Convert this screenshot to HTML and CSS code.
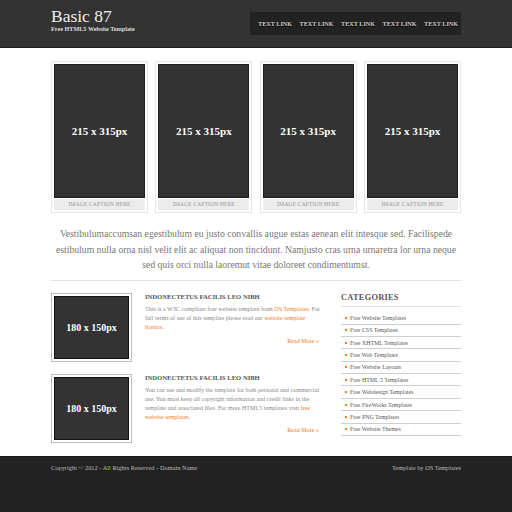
FILE: index.html
```html
<!DOCTYPE html>
<html>
<head>
<meta charset="utf-8">
<title>Basic 87</title>
<link rel="stylesheet" href="styles.css">
</head>
<body>
<header class="site-header">
  <div class="wrap header-inner">
    <div class="brand">
      <h1 class="logo">Basic 87</h1>
      <p class="tagline">Free HTML5 Website Template</p>
    </div>
    <nav class="topnav">
      <a href="#">Text Link</a>
      <a href="#">Text Link</a>
      <a href="#">Text Link</a>
      <a href="#">Text Link</a>
      <a href="#">Text Link</a>
    </nav>
  </div>
</header>

<main class="wrap">
  <section class="gallery">
    <figure class="card"><div class="ph">215 x 315px</div><figcaption>Image Caption Here</figcaption></figure>
    <figure class="card"><div class="ph">215 x 315px</div><figcaption>Image Caption Here</figcaption></figure>
    <figure class="card"><div class="ph">215 x 315px</div><figcaption>Image Caption Here</figcaption></figure>
    <figure class="card"><div class="ph">215 x 315px</div><figcaption>Image Caption Here</figcaption></figure>
  </section>

  <p class="intro">Vestibulumaccumsan egestibulum eu justo convallis augue estas aenean elit intesque sed. Facilispede estibulum nulla orna nisl velit elit ac aliquat non tincidunt. Namjusto cras urna urnaretra lor urna neque sed quis orci nulla laoremut vitae doloreet condimentumst.</p>

  <div class="lower">
    <div class="articles">
      <article class="post">
        <div class="thumb"><div class="thumb-in">180 x 150px</div></div>
        <div class="post-body">
          <h2>Indonectetus Facilis Leo Nibh</h2>
          <p>This is a W3C compliant free website template from <a href="#">OS Templates</a>. For full terms of use of this template please read our <a href="#">website template licence</a>.</p>
          <p class="more"><a href="#">Read More &raquo;</a></p>
        </div>
      </article>
      <article class="post">
        <div class="thumb"><div class="thumb-in">180 x 150px</div></div>
        <div class="post-body">
          <h2>Indonectetus Facilis Leo Nibh</h2>
          <p>You can use and modify the template for both personal and commercial use. You must keep all copyright information and credit links in the template and associated files. For more HTML5 templates visit <a href="#">free website templates</a>.</p>
          <p class="more"><a href="#">Read More &raquo;</a></p>
        </div>
      </article>
    </div>
    <aside class="sidebar">
      <h2>Categories</h2>
      <ul>
        <li><a href="#">Free Website Templates</a></li>
        <li><a href="#">Free CSS Templates</a></li>
        <li><a href="#">Free XHTML Templates</a></li>
        <li><a href="#">Free Web Templates</a></li>
        <li><a href="#">Free Website Layouts</a></li>
        <li><a href="#">Free HTML 5 Templates</a></li>
        <li><a href="#">Free Webdesign Templates</a></li>
        <li><a href="#">Free FireWorks Templates</a></li>
        <li><a href="#">Free PNG Templates</a></li>
        <li><a href="#">Free Website Themes</a></li>
      </ul>
    </aside>
  </div>
</main>

<footer class="site-footer">
  <div class="wrap footer-inner">
    <p>Copyright &copy; 2012 - All Rights Reserved - <a href="#">Domain Name</a></p>
    <p>Template by <a href="#">OS Templates</a></p>
  </div>
</footer>
</body>
</html>
```

FILE: styles.css
```css
* { box-sizing: border-box; }
html, body { margin: 0; padding: 0; }
body {
  font-family: "Liberation Serif", "DejaVu Serif", serif;
  background: #fff;
  color: #777;
}
a { text-decoration: none; }
p, h1, h2, ul, figure { margin: 0; padding: 0; }

.wrap { width: 410px; margin: 0 auto; }

/* header */
.site-header {
  background: #333;
  height: 48px;
  border-bottom: 1px solid #1c1c1c;
}
.header-inner {
  display: flex;
  justify-content: space-between;
  align-items: flex-start;
}
.brand { padding-top: 7px; }
.logo {
  font-size: 17.5px;
  font-weight: normal;
  color: #eee;
  line-height: 18px;
}
.tagline {
  font-size: 6.2px;
  font-weight: bold;
  color: #ddd;
  margin-top: 0;
}
.topnav {
  margin-top: 12px;
  background: #222;
  height: 23px;
  width: 211px;
  display: flex;
  align-items: center;
  padding-left: 8px;
  gap: 10px;
}
.topnav a {
  color: #d4ccc8;
  font-size: 6.2px;
  font-weight: bold;
  text-transform: uppercase;
  width: 31.5px;
  white-space: nowrap;
  text-shadow: 0 1px 0 #000;
}

/* gallery */
.gallery {
  display: flex;
  justify-content: space-between;
  margin-top: 13px;
}
.card {
  width: 97px;
  border: 1px solid #e6e6e6;
  padding: 2px;
}
.ph {
  height: 134px;
  background: #333;
  border: 1px solid #1e1e1e;
  color: #fff;
  font-weight: bold;
  font-size: 11px;
  display: flex;
  align-items: center;
  justify-content: center;
}
.card figcaption {
  margin-top: 1px;
  height: 11px;
  background: #ececec;
  color: #999;
  font-size: 5.8px;
  text-transform: uppercase;
  text-align: center;
  line-height: 11px;
}

/* intro */
.intro {
  margin-top: 13px;
  text-align: center;
  font-size: 9.7px;
  line-height: 15.7px;
  color: #777;
  padding: 0 0 7px;
  border-bottom: 1px solid #e3e3e3;
}

/* lower */
.lower {
  display: flex;
  justify-content: space-between;
  padding-top: 12px;
}
.articles { width: 270px; }
.post {
  display: flex;
  gap: 13px;
  margin-bottom: 12px;
}
.post:last-child { margin-bottom: 0; }
.thumb {
  flex: none;
  width: 81px;
  height: 69px;
  border: 1px solid #bdbdbd;
  padding: 2px;
}
.thumb-in {
  height: 100%;
  background: #333;
  border: 1px solid #111;
  color: #fff;
  font-weight: bold;
  font-size: 10px;
  display: flex;
  align-items: center;
  justify-content: center;
}
.post-body { flex: 1; }
.post-body h2 {
  font-size: 6.6px;
  font-weight: bold;
  text-transform: uppercase;
  color: #555;
  line-height: 7px;
  margin-bottom: 5px;
}
.post-body p {
  font-size: 6.1px;
  line-height: 8.8px;
  color: #888;
}
.post-body a { color: #f27a21; }
.post-body .more {
  text-align: right;
  margin-top: 5px;
  padding-right: 2px;
}

.sidebar { width: 120px; }
.sidebar h2 {
  font-size: 8.3px;
  font-weight: bold;
  text-transform: uppercase;
  color: #555;
  letter-spacing: 0.3px;
  line-height: 9px;
  padding: 0 0 4px;
  border-bottom: 1px solid #e3e3e3;
  margin-bottom: 5px;
}
.sidebar ul { list-style: none; }
.sidebar li {
  height: 12.4px;
  border-bottom: 1px solid #cfcfcf;
  display: flex;
  align-items: center;
  padding-left: 4px;
  gap: 3px;
}
.sidebar li::before {
  content: "";
  width: 2px;
  height: 2px;
  background: #f27a21;
}
.sidebar li a {
  color: #555;
  font-size: 5.9px;
}

/* footer */
.site-footer {
  margin-top: 13px;
  background: #222;
  border-top: 1px solid #1a1a1a;
  min-height: 60px;
}
.footer-inner {
  display: flex;
  justify-content: space-between;
  padding-top: 7px;
}
.footer-inner p {
  font-size: 6.4px;
  color: #bbb;
}
.footer-inner a { color: #bbb; }
```
